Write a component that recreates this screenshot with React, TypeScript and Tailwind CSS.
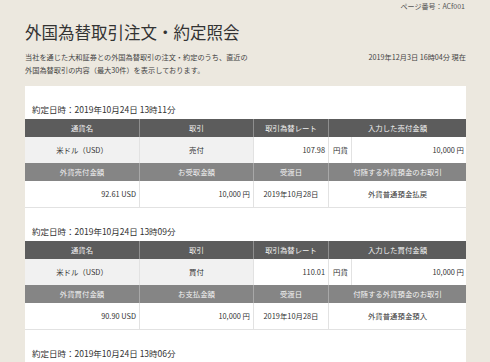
interface Trade {
  time: string;
  side: string;
  rate: string;
  inputLabel: string;
  inputAmount: string;
  fxLabel: string;
  fxAmount: string;
  yenLabel: string;
  yenAmount: string;
  settle: string;
  deposit: string;
}

const trades: Trade[] = [
  {
    time: "2019年10月24日 13時11分",
    side: "売付",
    rate: "107.98",
    inputLabel: "入力した売付金額",
    inputAmount: "10,000 円",
    fxLabel: "外貨売付金額",
    fxAmount: "92.61 USD",
    yenLabel: "お受取金額",
    yenAmount: "10,000 円",
    settle: "2019年10月28日",
    deposit: "外貨普通預金払戻",
  },
  {
    time: "2019年10月24日 13時09分",
    side: "買付",
    rate: "110.01",
    inputLabel: "入力した買付金額",
    inputAmount: "10,000 円",
    fxLabel: "外貨買付金額",
    fxAmount: "90.90 USD",
    yenLabel: "お支払金額",
    yenAmount: "10,000 円",
    settle: "2019年10月28日",
    deposit: "外貨普通預金預入",
  },
];

const font = { fontFamily: '"Noto Sans CJK JP", "Noto Sans", sans-serif' };

function TradeTable({ t }: { t: Trade }) {
  const dark = "h-[18px] flex items-center justify-center bg-[#5c5c5c] text-[#f2f2f2] border-l border-[#8e8e8e]";
  const mid = "h-[18px] flex items-center justify-center bg-[#858585] text-[#f2f2f2] border-l border-[#a8a8a8]";
  const cell = "h-[26px] flex items-center border-l border-[#e2e2e2] text-[#333]";
  return (
    <div className="grid grid-cols-[114px_114px_75px_23px_115px] text-[7.4px] border-b border-[#e2e2e2]">
      <div className={dark + " border-l-0"}>通貨名</div>
      <div className={dark}>取引</div>
      <div className={dark}>取引為替レート</div>
      <div className={dark + " col-span-2"}>{t.inputLabel}</div>

      <div className={cell + " justify-center bg-[#f1f1f1] border-l-0"}>米ドル（USD）</div>
      <div className={cell + " justify-center bg-[#f1f1f1]"}>{t.side}</div>
      <div className={cell + " justify-end pr-[3px]"}>{t.rate}</div>
      <div className={cell + " pl-[4px]"}>円貨</div>
      <div className={cell + " justify-end pr-[2px]"}>{t.inputAmount}</div>

      <div className={mid + " border-l-0"}>{t.fxLabel}</div>
      <div className={mid}>{t.yenLabel}</div>
      <div className={mid}>受渡日</div>
      <div className={mid + " col-span-2"}>付随する外貨預金のお取引</div>

      <div className={cell + " justify-end pr-[3px] border-l-0"}>{t.fxAmount}</div>
      <div className={cell + " justify-end pr-[3px]"}>{t.yenAmount}</div>
      <div className={cell + " justify-center"}>{t.settle}</div>
      <div className={cell + " justify-center col-span-2"}>{t.deposit}</div>
    </div>
  );
}

export default function App() {
  return (
    <div className="min-h-[362px] bg-[#ece8df] overflow-hidden" style={font}>
      <div className="ml-[25px] w-[441px]">
        <div className="h-[12px] leading-[12px] text-right text-[7px] text-[#555] pr-[1px]">ページ番号：ACf001</div>
        <h1 className="mt-[9px] text-[16.5px] leading-[22px] text-[#333]">外国為替取引注文・約定照会</h1>
        <div className="mt-[8px] flex justify-between text-[7.2px] leading-[13px] text-[#444]">
          <p className="w-[224px]">
            当社を通じた大和証券との外国為替取引の注文・約定のうち、直近の外国為替取引の内容（最大30件）を表示しております。
          </p>
          <p>2019年12月3日 16時04分 現在</p>
        </div>
        <div className="mt-[9px] bg-white pt-[16px] pb-[40px]">
          {trades.map((t, i) => (
            <div key={i} className="mb-[16px]">
              <div className="h-[14px] leading-[14px] mb-[3px] pl-[7px] text-[8.5px] text-[#333]">約定日時：{t.time}</div>
              <TradeTable t={t} />
            </div>
          ))}
          <div className="h-[14px] leading-[14px] pl-[7px] text-[8.5px] text-[#333]">約定日時：2019年10月24日 13時06分</div>
        </div>
      </div>
    </div>
  );
}
